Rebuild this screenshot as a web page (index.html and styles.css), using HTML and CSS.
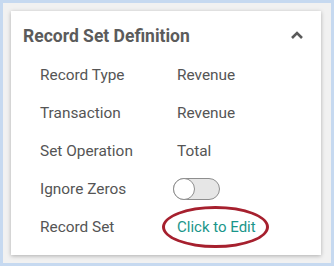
FILE: index.html
```html
<!DOCTYPE html>
<html lang="en">
<head>
    <meta charset="UTF-8">
    <title>Record Set Definition</title>
    <link rel="stylesheet" href="styles.css">
</head>
<body>

<div class="frame">
    <div class="card">
        <div class="card-header">
            <h2>Record Set Definition</h2>
            <svg class="caret" width="14" height="10" viewBox="0 0 14 10">
                <path d="M2 8 L7 3 L12 8" fill="none" stroke="#5a5a5a" stroke-width="2.6"/>
            </svg>
        </div>
        <div class="rows">
            <div class="row"><span class="label">Record Type</span><span class="value">Revenue</span></div>
            <div class="row"><span class="label">Transaction</span><span class="value">Revenue</span></div>
            <div class="row"><span class="label">Set Operation</span><span class="value">Total</span></div>
            <div class="row"><span class="label">Ignore Zeros</span><span class="value"><span class="toggle"><span class="knob"></span></span></span></div>
            <div class="row"><span class="label">Record Set</span><span class="value"><span class="edit-link">Click to Edit</span></span></div>
        </div>
    </div>
</div>

</body>
</html>
```

FILE: styles.css
```css
html, body {
    margin: 0;
    padding: 0;
}
body {
    font-family: Roboto, "Noto Sans", sans-serif;
    background-color: #c6d9f0;
}
.frame {
    box-sizing: border-box;
    width: 334px;
    height: 266px;
    margin: 0;
    border: 3px solid #c6d9f0;
    background-color: #f1f1f1;
    padding: 8px 10px 10px 8px;
}
.card {
    background-color: #fff;
    height: 244px;
    box-shadow: 0 1px 4px rgba(0, 0, 0, 0.28);
}
.card-header {
    display: flex;
    align-items: center;
    justify-content: space-between;
    padding: 11px 17px 0 12px;
    height: 28px;
}
.card-header h2 {
    margin: 0;
    font-size: 17.5px;
    font-weight: bold;
    color: #5b5b5b;
}
.caret {
    margin-top: -3px;
}
.rows {
    padding: 6px 0 0 29px;
}
.row {
    display: flex;
    align-items: center;
    height: 38px;
    font-size: 15.4px;
    color: #555;
}
.label {
    width: 137px;
}
.value {
    display: flex;
    align-items: center;
}
.toggle {
    position: relative;
    display: inline-block;
    box-sizing: border-box;
    width: 47px;
    height: 22px;
    margin-left: -4px;
    border: 1px solid #8e8e8e;
    border-radius: 11px;
    background-color: #e6e6e6;
}
.knob {
    position: absolute;
    left: -1px;
    top: -1px;
    box-sizing: border-box;
    width: 22px;
    height: 22px;
    border: 1px solid #8e8e8e;
    border-radius: 50%;
    background-color: #fff;
}
.edit-link {
    display: inline-block;
    margin-left: -15px;
    padding: 9px 10px 9px 12px;
    border: 3px solid #a6202e;
    border-radius: 50%;
    color: #1a968a;
    font-size: 15px;
}
```
